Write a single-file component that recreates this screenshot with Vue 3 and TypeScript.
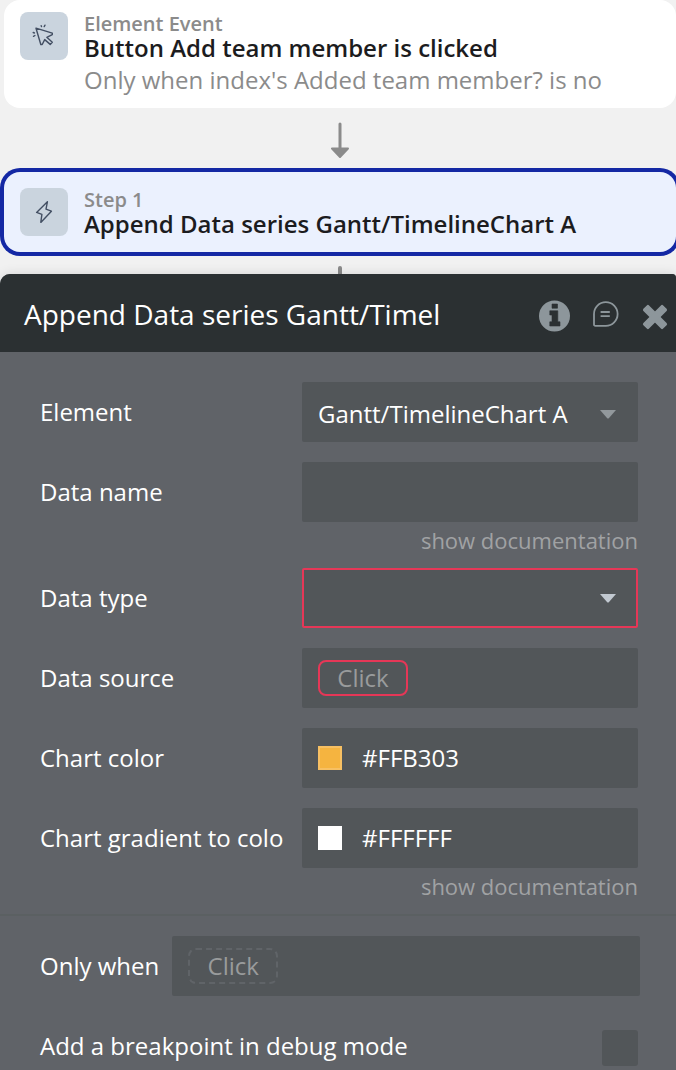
<script setup lang="ts">
import { ref } from 'vue'

const element = ref('Gantt/TimelineChart A')
const dataName = ref('')
const dataType = ref('')
const chartColor = ref('#FFB303')
const gradientColor = ref('#FFFFFF')
const breakpoint = ref(false)
</script>

<template>
  <main class="page">
    <section class="flow">
      <article class="card event">
        <span class="tile">
          <svg width="24" height="24" viewBox="0 0 24 24" fill="none" stroke="#434f63" stroke-width="1.4" stroke-linejoin="round" stroke-linecap="round" aria-hidden="true">
            <path d="M4 4.2L20.3 9.1V10.6L14.8 13.3L20.3 18.2L18.2 20.4L12.7 15.6L10.2 20.5H8.8Z" />
            <path d="M9.2 1.6L9.5 2.5M13 1.2L12.2 2.6M1.2 8.5L2.4 9M1.5 12.3L2.9 11.5" />
          </svg>
        </span>
        <div class="texts">
          <p class="kicker">Element Event</p>
          <h2 class="name">Button Add team member is clicked</h2>
          <p class="condition">Only when index's Added team member? is no</p>
        </div>
      </article>

      <svg class="arrow" width="20" height="36" viewBox="0 0 20 36" aria-hidden="true">
        <path d="M10 2V28" stroke="#8b8b8b" stroke-width="3" stroke-linecap="round" />
        <path d="M2 26.5H18L10 35Z" fill="#8b8b8b" stroke="#8b8b8b" stroke-width="2" stroke-linejoin="round" />
      </svg>

      <article class="card step">
        <span class="tile">
          <svg width="24" height="24" viewBox="0 0 24 24" fill="none" stroke="#434f63" stroke-width="1.4" stroke-linejoin="round" aria-hidden="true">
            <path d="M15.4 1.8L4.6 12.4L9.9 14.4L8.8 22.4L19.4 11.2L14 9.1Z" />
          </svg>
        </span>
        <div class="texts">
          <p class="kicker">Step 1</p>
          <h2 class="name">Append Data series Gantt/TimelineChart A</h2>
        </div>
      </article>
      <span class="stem"></span>
    </section>

    <section class="panel">
      <header class="head">
        <h1 class="title">Append Data series Gantt/Timel</h1>
        <div class="actions">
          <button type="button" class="icon" aria-label="Information">
            <svg width="31" height="32" viewBox="0 0 31 32" aria-hidden="true">
              <circle cx="15.5" cy="16" r="15.5" fill="#8d969b" />
              <path d="M13 4H18.5V8.2H13ZM10.8 10.8H18.8V21.8H21V26H10.8V21.8H13V15H10.8Z" fill="#2b3032" stroke="#2b3032" stroke-width="0.6" stroke-linejoin="round" />
            </svg>
          </button>
          <button type="button" class="icon" aria-label="Comments">
            <svg width="26" height="30" viewBox="0 0 26 30" fill="none" stroke="#8d969b" stroke-width="1.8" aria-hidden="true">
              <path d="M1 13A11.8 11.8 0 1 1 12.8 24.8H2.4Q1 24.8 1 23.4Z" />
              <path d="M7.6 11H16.8M7.6 15.2H16.8" />
            </svg>
          </button>
          <button type="button" class="icon" aria-label="Close">
            <svg width="26" height="28" viewBox="0 0 26 28" fill="#8d969b" aria-hidden="true">
              <rect x="-1" y="11" width="28" height="8" rx="1.6" transform="rotate(45 13 15)" />
              <rect x="-1" y="11" width="28" height="8" rx="1.6" transform="rotate(-45 13 15)" />
            </svg>
          </button>
        </div>
      </header>

      <form class="fields" @submit.prevent>
        <div class="row">
          <label for="element">Element</label>
          <div class="pick">
            <select id="element" v-model="element" class="box filled">
              <option>Gantt/TimelineChart A</option>
            </select>
            <svg class="caret low" width="16" height="9" viewBox="0 0 16 9" aria-hidden="true"><path d="M0 0H16L9 8Q8 9 7 8Z" fill="#92989c" /></svg>
          </div>
        </div>
        <div class="row">
          <label for="data-name">Data name</label>
          <input id="data-name" v-model="dataName" type="text" class="box" />
        </div>
        <a href="#" class="doc">show documentation</a>
        <div class="row">
          <label for="data-type">Data type</label>
          <div class="pick">
            <select id="data-type" v-model="dataType" class="box invalid">
              <option value=""></option>
            </select>
            <svg class="caret" width="16" height="9" viewBox="0 0 16 9" aria-hidden="true"><path d="M0 0H16L9 8Q8 9 7 8Z" fill="#c2c9d1" /></svg>
          </div>
        </div>
        <div class="row">
          <label for="data-source">Data source</label>
          <div class="box"><button id="data-source" type="button" class="chip invalid">Click</button></div>
        </div>
        <div class="row">
          <label for="chart-color">Chart color</label>
          <div class="box">
            <button type="button" class="swatch amber" aria-label="Pick chart color"></button>
            <input id="chart-color" v-model="chartColor" type="text" class="hex" />
          </div>
        </div>
        <div class="row">
          <label for="gradient-color">Chart gradient to colo</label>
          <div class="box">
            <button type="button" class="swatch white" aria-label="Pick gradient color"></button>
            <input id="gradient-color" v-model="gradientColor" type="text" class="hex" />
          </div>
        </div>
        <a href="#" class="doc">show documentation</a>

        <div class="extra">
          <div class="when">
            <label for="only-when">Only when</label>
            <div class="box"><button id="only-when" type="button" class="chip">Click</button></div>
          </div>
          <div class="debug">
            <label for="breakpoint">Add a breakpoint in debug mode</label>
            <input id="breakpoint" v-model="breakpoint" type="checkbox" class="check" />
          </div>
        </div>
      </form>
    </section>
  </main>
</template>

<style>
body {
  margin: 0;
  background: #f1f1f1;
}
</style>

<style scoped>
* {
  box-sizing: border-box;
}
.page {
  display: flex;
  flex-direction: column;
  min-height: 100vh;
  overflow: hidden;
  font-family: "Open Sans", "Noto Sans", sans-serif;
  font-size: 24px;
  line-height: 32px;
  color: #fff;
}
h1, h2, p {
  margin: 0;
}
button, input, select {
  font: inherit;
  color: inherit;
}
button {
  padding: 0;
  border: 0;
  background: none;
  cursor: pointer;
}
.flow {
  display: flex;
  flex-direction: column;
  padding-left: 4px;
}
.card {
  display: flex;
  gap: 16px;
  padding: 12px 16px;
  background: #fff;
}
.event {
  border-radius: 16px;
}
.step {
  padding: 16px;
  border-radius: 16px;
  background: #ebf1fe;
  box-shadow: 0 0 0 4px #1428a4;
}
.tile {
  display: flex;
  flex: none;
  align-items: center;
  justify-content: center;
  width: 48px;
  height: 48px;
  border-radius: 8px;
  background: #cad4de;
}
.kicker {
  font-size: 20px;
  line-height: 24px;
  font-weight: 600;
  color: #8b8b8b;
}
.name {
  font-size: 24px;
  line-height: 24px;
  font-weight: 600;
  color: #1c1c1e;
}
.condition {
  padding-top: 4px;
  line-height: 32px;
  color: #8b8b8b;
}
.arrow {
  align-self: center;
  margin: 14px 0;
}
.stem {
  align-self: center;
  width: 4px;
  height: 8px;
  margin-top: 14px;
  border-radius: 2px 2px 0 0;
  background: #8b8b8b;
}
.panel {
  flex: 1;
  border-radius: 10px 4px 0 0;
  background: #606368;
  box-shadow: 0 0 12px rgba(0, 0, 0, 0.12);
  overflow: hidden;
}
.head {
  display: flex;
  align-items: center;
  justify-content: space-between;
  padding: 20px 8px 18px 24px;
  background: #2b3032;
}
.title {
  font-size: 28px;
  line-height: 40px;
  font-weight: 400;
}
.actions {
  display: flex;
  align-items: center;
  gap: 23px;
  padding-top: 4px;
}
.icon {
  display: flex;
}
.fields {
  display: flex;
  flex-direction: column;
  padding-top: 30px;
}
.row {
  display: grid;
  grid-template-columns: 262px minmax(0, 1fr);
  align-items: center;
  margin: 0 38px 20px 40px;
}
.row label {
  white-space: nowrap;
}
.box {
  display: flex;
  align-items: center;
  width: 100%;
  height: 60px;
  padding: 0 16px;
  border: 0;
  border-radius: 2px;
  background-color: #525659;
  appearance: none;
}
.box.invalid {
  border: 2px solid #e63757;
}
.box.filled {
  padding-top: 4px;
}
.pick {
  display: grid;
  align-items: center;
}
.pick > * {
  grid-area: 1 / 1;
}
.caret {
  justify-self: end;
  margin-right: 22px;
  pointer-events: none;
}
.caret.low {
  margin-top: 4px;
}
.doc {
  align-self: flex-end;
  margin: -18px 38px 12px 0;
  font-size: 22px;
  color: #a0a2a4;
  text-decoration: none;
}
.chip {
  width: 90px;
  height: 36px;
  border: 2px dashed #606468;
  border-radius: 8px;
  line-height: 32px;
  color: #999b9c;
}
.chip.invalid {
  border: 2px solid #e63757;
}
.swatch {
  flex: none;
  width: 24px;
  height: 24px;
  margin-right: 20px;
}
.amber {
  border: 2px solid #f7c063;
  background: #f5b440;
}
.white {
  background: #fff;
}
.hex {
  flex: 1;
  min-width: 0;
  padding: 0;
  border: 0;
  background: none;
}
.extra {
  border-top: 2px solid #5b6062;
  padding: 20px 36px 4px 40px;
}
.when {
  display: flex;
  align-items: center;
  gap: 13px;
}
.when label {
  flex: none;
}
.debug {
  display: flex;
  align-items: flex-start;
  justify-content: space-between;
  padding: 34px 2px 0 0;
}
.check {
  width: 36px;
  height: 36px;
  margin: 0;
  border-radius: 3px;
  background: #525659;
  appearance: none;
}
</style>
